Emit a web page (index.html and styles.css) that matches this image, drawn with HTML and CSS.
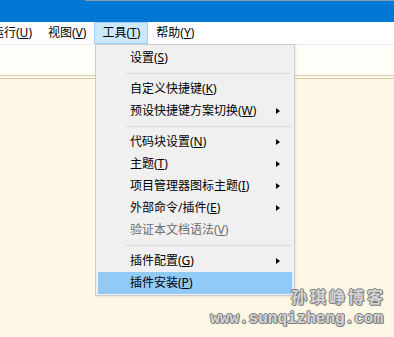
FILE: index.html
```html
<!DOCTYPE html>
<html lang="zh-CN">
<head>
<meta charset="utf-8">
<title>工具菜单</title>
<link rel="stylesheet" href="styles.css">
</head>
<body>
<div class="window">
  <div class="titlebar">
    <div class="title-left"></div>
    <div class="title-right"></div>
  </div>
  <div class="menubar">
    <div class="mb-item cut">运行(<u>U</u>)</div>
    <div class="mb-item">视图(<u>V</u>)</div>
    <div class="mb-item active">工具(<u>T</u>)</div>
    <div class="mb-item">帮助(<u>Y</u>)</div>
  </div>
  <div class="toolbar"></div>
  <div class="toolbar-gap"></div>
  <div class="editor"></div>

  <div class="menu">
    <div class="mi"><span class="label">设置(<u>S</u>)</span></div>
    <div class="sep"></div>
    <div class="mi"><span class="label">自定义快捷键(<u>K</u>)</span></div>
    <div class="mi"><span class="label">预设快捷键方案切换(<u>W</u>)</span><span class="arrow"></span></div>
    <div class="sep"></div>
    <div class="mi"><span class="label">代码块设置(<u>N</u>)</span><span class="arrow"></span></div>
    <div class="mi"><span class="label">主题(<u>T</u>)</span><span class="arrow"></span></div>
    <div class="mi"><span class="label">项目管理器图标主题(<u>I</u>)</span><span class="arrow"></span></div>
    <div class="mi"><span class="label">外部命令/插件(<u>E</u>)</span><span class="arrow"></span></div>
    <div class="mi disabled"><span class="label">验证本文档语法(<u>V</u>)</span></div>
    <div class="sep"></div>
    <div class="mi"><span class="label">插件配置(<u>G</u>)</span><span class="arrow"></span></div>
    <div class="mi hover"><span class="label">插件安装(<u>P</u>)</span></div>
  </div>

  <div class="watermark">
    <div class="wm-cn">孙琪峥博客</div>
    <div class="wm-url">www.sunqizheng.com</div>
  </div>
</div>
</body>
</html>
```

FILE: styles.css
```css
* { box-sizing: border-box; }

html, body {
  margin: 0;
  padding: 0;
  width: 394px;
  height: 337px;
  overflow: hidden;
  background: #fef7e5;
}

.window {
  position: relative;
  width: 394px;
  height: 337px;
  display: flex;
  flex-direction: column;
  font-family: "Noto Sans", "Noto Sans CJK SC", sans-serif;
  font-size: 12px;
  color: #000;
}

.titlebar {
  height: 22px;
  display: flex;
  background: #0078d4;
  flex: none;
}
.title-left { width: 85px; }
.title-right {
  flex: 1;
  border-top: 1px solid #8b9aab;
}

.menubar {
  height: 22px;
  background: #ffffff;
  display: flex;
  align-items: stretch;
  flex: none;
}

.mb-item {
  padding: 0 7px;
  line-height: 20px;
  border: 1px solid transparent;
  white-space: nowrap;
}
.mb-item.cut { margin-left: -16px; }
.mb-item.active {
  background: #cce8ff;
  border-color: #99d1ff;
}

u {
  text-decoration: underline;
  text-underline-offset: 1px;
}

.toolbar {
  height: 32px;
  background: #fefdf8;
  border-top: 1px solid #ebebeb;
  border-bottom: 1px solid #d8cba6;
  flex: none;
}
.toolbar-gap {
  height: 3px;
  background: #fefcf3;
  border-bottom: 1px solid #d8cba6;
  flex: none;
}
.editor {
  flex: 1;
  background: #fef7e5;
}

.menu {
  position: absolute;
  left: 95px;
  top: 44px;
  width: 200px;
  background: #f0f0f0;
  border: 1px solid #cccccc;
  padding: 2px 2px 1px 2px;
  box-shadow: 1px 1px 2px rgba(0, 0, 0, 0.08);
}

.mi {
  height: 22px;
  display: flex;
  align-items: center;
  padding-left: 32px;
  padding-right: 12px;
  line-height: 22px;
  white-space: nowrap;
}
.mi .label { flex: 1; }
.mi.disabled { color: #6d6d6d; }
.mi.hover { background: #91c9f7; }

.arrow {
  width: 0;
  height: 0;
  border-left: 4px solid #000;
  border-top: 3.5px solid transparent;
  border-bottom: 3.5px solid transparent;
}

.sep {
  height: 9px;
  padding-top: 4px;
  margin-left: 28px;
  margin-right: 1px;
}
.sep::before {
  content: "";
  display: block;
  height: 1px;
  background: #d7d7d7;
}

.watermark {
  position: absolute;
  right: 11px;
  top: 286px;
  display: flex;
  flex-direction: column;
  align-items: flex-end;
  pointer-events: none;
}
.wm-cn {
  font-family: "Noto Sans CJK SC", sans-serif;
  font-weight: 700;
  font-size: 16px;
  line-height: 20px;
  letter-spacing: 3px;
  margin-right: -3px;
  color: #d4d4d4;
  text-shadow: 1px 0 0 #7d7d7d, -1px 0 0 #7d7d7d, 0 1px 0 #7d7d7d, 0 -1px 0 #7d7d7d, 1px 1px 0 #9a9a9a;
}
.wm-url {
  font-family: "Liberation Mono", monospace;
  font-weight: 700;
  font-size: 16px;
  line-height: 18px;
  margin-top: 4px;
  color: #d4d4d4;
  text-shadow: 1px 0 0 #7d7d7d, -1px 0 0 #7d7d7d, 0 1px 0 #7d7d7d, 0 -1px 0 #7d7d7d, 1px 1px 0 #9a9a9a;
}
```
